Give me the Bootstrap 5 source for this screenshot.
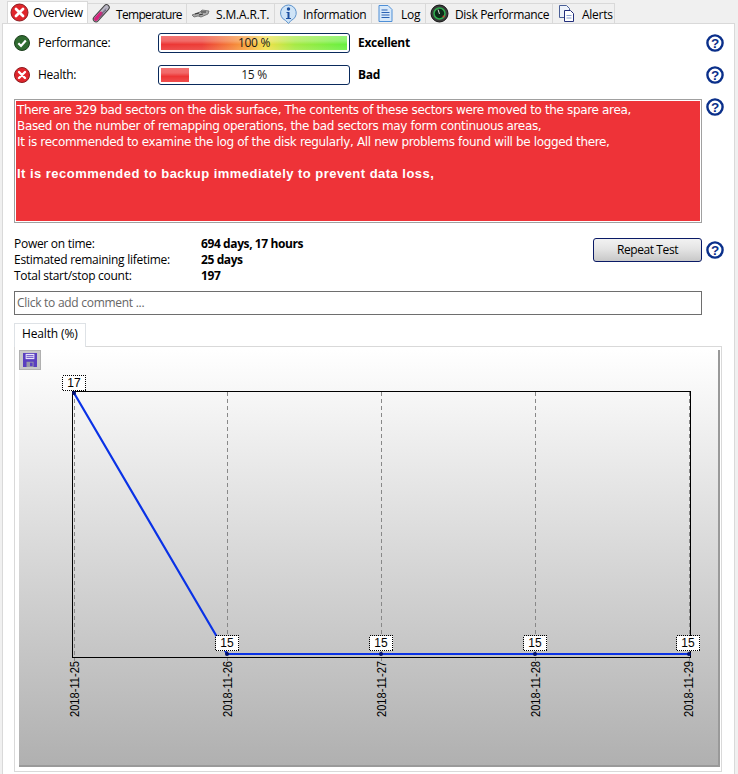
<!DOCTYPE html>
<html lang="en">
<head>
<meta charset="utf-8">
<title>Overview</title>
<link href="https://cdn.jsdelivr.net/npm/bootstrap@5.3.0/dist/css/bootstrap.min.css" rel="stylesheet">
<style>
html,body{height:774px;overflow:hidden}
body{background:#f0f0f0;font:12px/16px "Open Sans","Liberation Sans",sans-serif;color:#000;letter-spacing:-.28px}
.app-tabs{height:23px;padding:1px 0 0 7px;border:0;align-items:flex-end;flex-wrap:nowrap}
.app-tabs .nav-link{height:20px;margin:0;padding:2px 0 0 4px;border:1px solid #d9d9d9;border-bottom:0;border-left:0;border-radius:0;background:#f0f0f0;color:#000;display:flex;align-items:center;gap:5px;font-size:12px;line-height:16px}
.app-tabs .nav-link svg{margin-top:-2px}
.app-tabs .nav-link.active{height:22px;background:#fff;border:1px solid #d9d9d9;border-bottom:0;padding:0 0 0 2px;gap:4px;color:#000}
.app-tabs .nav-link.active svg{margin-top:0}
.w1{width:81px}.w2{width:99px}.w2 span{letter-spacing:-.68px}.w3{width:88px}.w3 span{margin-left:1px;letter-spacing:-.15px}.w4{width:97px}.w5{width:54px}.w5 span{margin-left:1px}.w6{width:127px}.w6 span{margin-left:1px;letter-spacing:-.34px}.w7{width:62px}.w7 span{margin-left:1px}
.main-pane{margin-left:2px;width:733px;height:760px;background:#fff;border:1px solid #d9d9d9;padding:9px 10px 0 11px}
.stat-row{height:20px}
.stat-row+.stat-row{margin-top:12px}
.stat-ico{width:16px;height:16px;flex:none}
.stat-label{width:128px;padding-left:8px;flex:none}
.meter{width:192px;height:20px;flex:none;border:1px solid #0a2a5c;border-radius:3px;padding:2px;position:relative;background:#fff}
.meter-fill{height:100%;background:linear-gradient(180deg,rgba(255,255,255,.3) 0,rgba(255,255,255,.25) 35%,rgba(255,255,255,0) 60%,rgba(255,255,255,.12) 100%),#ed3535}
.meter-fill.rainbow{background:linear-gradient(180deg,rgba(255,255,255,.3) 0,rgba(255,255,255,.25) 35%,rgba(255,255,255,0) 60%,rgba(255,255,255,.12) 100%),linear-gradient(90deg,#ec3636 0,#ec3d36 22%,#f9a33c 46%,#f4e04a 56%,#a6ea45 72%,#66f03f 100%)}
.meter-text{position:absolute;inset:0;text-align:center;line-height:18px;color:#1a1a1a}
.stat-value{font-weight:700;margin-left:8px;font-size:12px}
.help-ico{width:18px;height:18px;flex:none}
.help-up{margin-top:-1px}
.help-low{margin-top:6px}
.msg-row{margin-top:14px}
.msg-box{width:688px;height:124px;flex:none;background:#ee3338;border:1px solid #a0a0a0;box-shadow:inset 0 0 0 1px #fff;color:#fff;padding:2px 2px 0;font:12px/16px "DejaVu Sans","Liberation Sans",sans-serif;letter-spacing:-.35px;margin-right:4px}
.msg-strong{font-weight:700;margin-top:16px;letter-spacing:.47px;font-family:"Liberation Sans",sans-serif;font-size:13px}
.info-block{margin-top:12px;height:48px}
.info-lines{padding-top:1px}
.info-key{width:187px}
.info-val{font-weight:700;letter-spacing:-.4px}
.btn-repeat{width:109px;height:24px;margin:3px 4px 0 0;padding:0;font-size:12px;line-height:20px;color:#000;letter-spacing:-.4px;border:1px solid #0a1a66;border-radius:3px;background:linear-gradient(180deg,#f2f2f2,#e4e4e4 45%,#c8c8c8)}
.comment-box{display:block;width:688px;height:24px;margin-top:8px;padding:0 2px 2px;border:1px solid #6e6e6e;border-radius:0;font-size:12px;letter-spacing:-.28px;color:#000;box-shadow:none}
.comment-box::placeholder{color:#666;opacity:1}
.sub-tabs{margin-top:8px;border:0;height:24px}
.sub-tabs .nav-link{width:72px;height:24px;padding:0 0 0 7px;margin:0;background:#fff;color:#000;border:1px solid #d9d9d9;border-bottom:0;border-radius:0;font-size:12px;line-height:20px;letter-spacing:-.15px}
.chart-pane{width:708px;height:426px;margin-top:-1px;border:1px solid #d9d9d9;padding:3px 2px 0 4px;background:#fff}
.chart-surface{width:701px;height:417px;position:relative;border-right:2px solid #999;border-bottom:2px solid #999;background:linear-gradient(180deg,#fff 0,#b0b0b0 100%)}
.chart-svg{display:block;width:699px;height:415px}
.chart-svg text{font-family:"Liberation Sans",sans-serif;font-size:12px;fill:#000;letter-spacing:0}
.dotted{shape-rendering:crispEdges}
.save-btn{position:absolute;left:0;top:0;width:22px;height:20px;padding:1px 3px;border:1px solid #b0b0b0;background:#c9c9c9;border-radius:0;display:flex}
</style>
</head>
<body>
<nav class="nav nav-tabs app-tabs">
  <a class="nav-link active w1" href="#">
    <svg width="19" height="19" viewBox="0 0 19 19"><circle cx="9.500" cy="9.500" r="8.500" fill="#e0262c" stroke="#8c1a1f"/><path d="M6 6l7 7M13 6l-7 7" stroke="#fff" stroke-width="2.800" stroke-linecap="round"/></svg>
    <span>Overview</span></a>
  <a class="nav-link w2" href="#">
    <svg width="19" height="19" viewBox="0 0 19 19"><path d="M4 15L14.500 3.500" stroke="#444" stroke-width="6.500" stroke-linecap="round"/><path d="M4 15L14.500 3.500" stroke="#b9b6c4" stroke-width="4.500" stroke-linecap="round"/><path d="M4 15L9 9.500" stroke="#d6247c" stroke-width="4" stroke-linecap="round"/><path d="M7 14l7-8M9.500 9.500L14 4.500" stroke="#6d6780" stroke-width="1"/></svg>
    <span>Temperature</span></a>
  <a class="nav-link w3" href="#">
    <svg width="19" height="19" viewBox="0 0 19 19"><path d="M1 11l8-3 2-2 7 1-1 3-7 3-3-1-4 1z" fill="#aaa" stroke="#666" stroke-width=".8"/><path d="M4 10l4-1M10 8l5 0M8 11l4-1" stroke="#333" stroke-width="1"/></svg>
    <span>S.M.A.R.T.</span></a>
  <a class="nav-link w4" href="#">
    <svg width="19" height="20" viewBox="0 0 19 20"><path d="M9.500 1a8 8 0 0 0-3 15.400L9.500 19.500l2.500-3A8 8 0 0 0 9.500 1z" fill="#cfe4f7" stroke="#5d93cc"/><circle cx="9.500" cy="5" r="1.700" fill="#1c4fa0"/><path d="M7.500 8h3v6h1.500v1H7v-1h1.500V9h-1z" fill="#1c4fa0"/></svg>
    <span>Information</span></a>
  <a class="nav-link w5" href="#">
    <svg width="19" height="19" viewBox="0 0 19 19"><path d="M3 1.500h9l4 4v12H3z" fill="#d8e9fa" stroke="#4f8fd6"/><path d="M5.500 6h6M5.500 8.500h8M5.500 11h8M5.500 13.500h8" stroke="#2a62b4" stroke-width="1.200"/></svg>
    <span>Log</span></a>
  <a class="nav-link w6" href="#">
    <svg width="19" height="19" viewBox="0 0 19 19"><circle cx="9.500" cy="9.500" r="8.500" fill="#3a3a3a" stroke="#111"/><circle cx="9.500" cy="9.500" r="5.500" fill="#0c2a18" stroke="#2fae4e" stroke-width="1.500"/><path d="M9.500 10L8 5.500" stroke="#ddd" stroke-width="1"/><circle cx="13.500" cy="12.500" r="1" fill="#d33"/></svg>
    <span>Disk Performance</span></a>
  <a class="nav-link w7" href="#">
    <svg width="19" height="19" viewBox="0 0 19 19"><path d="M2.500 1.500h7l3 3v9h-10z" fill="#eef3fb" stroke="#4a5f96"/><path d="M7.500 6.500h6l3 3v8h-9z" fill="#fff" stroke="#232f7c"/><path d="M9.500 11.500h5M9.500 14h5" stroke="#8aa0cf"/></svg>
    <span>Alerts</span></a>
</nav>

<main class="main-pane">
  <div class="d-flex align-items-center stat-row">
    <svg class="stat-ico" viewBox="0 0 16 16"><circle cx="8" cy="8" r="7.500" fill="#2f6b30" stroke="#1d3f1e"/><path d="M4.300 8.300l2.700 2.600 4.800-5.300" fill="none" stroke="#fff" stroke-width="2.200"/></svg>
    <span class="stat-label">Performance:</span>
    <div class="meter"><div class="meter-fill rainbow"></div><div class="meter-text">100 %</div></div>
    <span class="stat-value">Excellent</span>
    <svg class="help-ico ms-auto" viewBox="0 0 18 18"><circle cx="9" cy="9" r="7.600" fill="#fff" stroke="#0a2f8a" stroke-width="2.400"/><text x="9" y="13.500" text-anchor="middle" font-family="Liberation Sans" font-weight="700" font-size="13.500" fill="#0a2f8a">?</text></svg>
  </div>
  <div class="d-flex align-items-center stat-row">
    <svg class="stat-ico" viewBox="0 0 16 16"><circle cx="8" cy="8" r="7.500" fill="#e0262c" stroke="#8c1a1f"/><path d="M5 5l6 6M11 5l-6 6" stroke="#fff" stroke-width="2.400" stroke-linecap="round"/></svg>
    <span class="stat-label">Health:</span>
    <div class="meter"><div class="meter-fill" style="width:15%"></div><div class="meter-text">15 %</div></div>
    <span class="stat-value">Bad</span>
    <svg class="help-ico ms-auto" viewBox="0 0 18 18"><circle cx="9" cy="9" r="7.600" fill="#fff" stroke="#0a2f8a" stroke-width="2.400"/><text x="9" y="13.500" text-anchor="middle" font-family="Liberation Sans" font-weight="700" font-size="13.500" fill="#0a2f8a">?</text></svg>
  </div>
  <div class="d-flex align-items-start msg-row">
    <div class="msg-box">
      <div>There are 329 bad sectors on the disk surface, The contents of these sectors were moved to the spare area,</div>
      <div>Based on the number of remapping operations, the bad sectors may form continuous areas,</div>
      <div>It is recommended to examine the log of the disk regularly, All new problems found will be logged there,</div>
      <div class="msg-strong">It is recommended to backup immediately to prevent data loss,</div>
    </div>
    <svg class="help-ico help-up" viewBox="0 0 18 18"><circle cx="9" cy="9" r="7.600" fill="#fff" stroke="#0a2f8a" stroke-width="2.400"/><text x="9" y="13.500" text-anchor="middle" font-family="Liberation Sans" font-weight="700" font-size="13.500" fill="#0a2f8a">?</text></svg>
  </div>
  <div class="d-flex info-block">
    <div class="flex-grow-1 info-lines">
      <div class="d-flex"><span class="info-key">Power on time:</span><span class="info-val">694 days, 17 hours</span></div>
      <div class="d-flex"><span class="info-key">Estimated remaining lifetime:</span><span class="info-val">25 days</span></div>
      <div class="d-flex"><span class="info-key">Total start/stop count:</span><span class="info-val">197</span></div>
    </div>
    <button type="button" class="btn btn-repeat">Repeat Test</button>
    <svg class="help-ico help-low" viewBox="0 0 18 18"><circle cx="9" cy="9" r="7.600" fill="#fff" stroke="#0a2f8a" stroke-width="2.400"/><text x="9" y="13.500" text-anchor="middle" font-family="Liberation Sans" font-weight="700" font-size="13.500" fill="#0a2f8a">?</text></svg>
  </div>
  <input class="form-control comment-box" type="text" placeholder="Click to add comment ...">
  <nav class="nav nav-tabs sub-tabs"><a class="nav-link active" href="#">Health (%)</a></nav>
  <section class="chart-pane">
    <div class="chart-surface">
      <svg class="chart-svg" viewBox="19 350 699 415">
        <rect x="72.500" y="391.500" width="618" height="266" fill="none" stroke="#000"/>
        <g stroke="#888" stroke-dasharray="4 3">
          <path d="M74.500 392V661M227.500 392V661M381.500 392V661M535.500 392V661M689.500 392V661"/>
        </g>
        <path d="M74 393L227 654H689" fill="none" stroke="#0a32e6" stroke-width="2.200"/>
        <g fill="#00106e"><circle cx="74" cy="393" r="2"/><circle cx="227" cy="654" r="2"/><circle cx="381" cy="654" r="2"/><circle cx="535" cy="654" r="2"/><circle cx="689" cy="654" r="2"/></g>
        <g class="dotted" fill="#fff" stroke="#000" stroke-dasharray="1 1">
          <rect x="62.500" y="375.500" width="23" height="15"/>
          <rect x="215.500" y="635.500" width="23" height="15"/>
          <rect x="369.500" y="635.500" width="23" height="15"/>
          <rect x="523.500" y="635.500" width="23" height="15"/>
          <rect x="676.500" y="635.500" width="23" height="15"/>
        </g>
        <g text-anchor="middle">
          <text x="74" y="387">17</text><text x="227" y="647">15</text><text x="381" y="647">15</text><text x="535" y="647">15</text><text x="688" y="647">15</text>
        </g>
        <g>
          <text textLength="56" lengthAdjust="spacingAndGlyphs" transform="translate(79 717) rotate(-90)">2018-11-25</text>
          <text textLength="56" lengthAdjust="spacingAndGlyphs" transform="translate(232 717) rotate(-90)">2018-11-26</text>
          <text textLength="56" lengthAdjust="spacingAndGlyphs" transform="translate(386 717) rotate(-90)">2018-11-27</text>
          <text textLength="56" lengthAdjust="spacingAndGlyphs" transform="translate(540 717) rotate(-90)">2018-11-28</text>
          <text textLength="56" lengthAdjust="spacingAndGlyphs" transform="translate(693 717) rotate(-90)">2018-11-29</text>
        </g>
      </svg>
      <button type="button" class="btn save-btn" aria-label="Save">
        <svg width="16" height="16" viewBox="0 0 16 16"><path d="M0 0h16v16H0z" fill="#5a3fc0"/><path d="M3 1h10v6H3z" fill="#e8e4fa"/><path d="M4 3h8M4 5h8" stroke="#5a3fc0"/><path d="M4 10h8v6H4z" fill="#9a9aa8"/><path d="M8 11h3v4H8z" fill="#5a3fc0"/></svg>
      </button>
    </div>
  </section>
</main>
<script src="https://cdn.jsdelivr.net/npm/bootstrap@5.3.0/dist/js/bootstrap.bundle.min.js"></script>
</body>
</html>
